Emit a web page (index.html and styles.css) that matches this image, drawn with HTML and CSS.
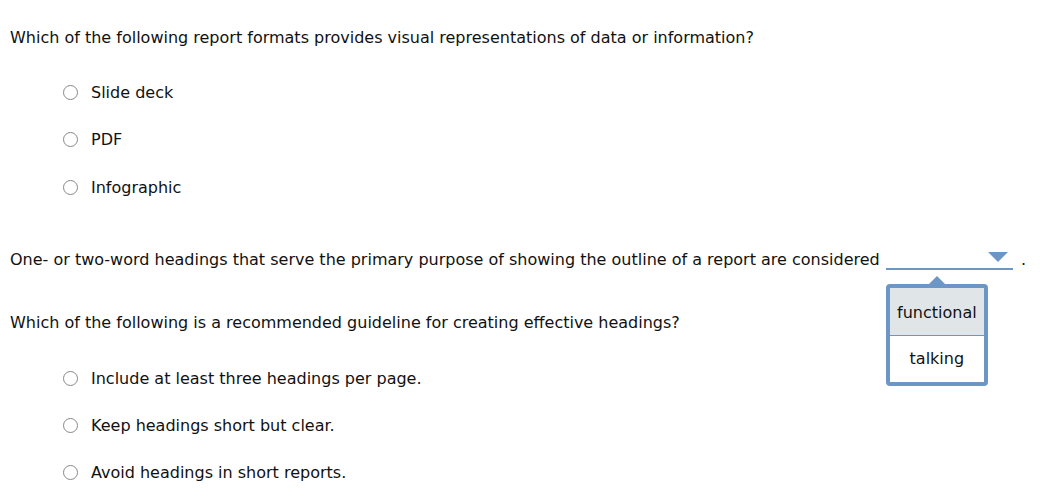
FILE: index.html
```html
<!DOCTYPE html>
<html lang="en">
<head>
    <meta charset="UTF-8">
    <title>Questions</title>
    <link rel="stylesheet" href="styles.css">
</head>
<body>
    <div class="question">
        <p class="prompt">Which of the following report formats provides visual representations of data or information?</p>
        <ul class="options">
            <li><span class="radio"></span>Slide deck</li>
            <li><span class="radio"></span>PDF</li>
            <li><span class="radio"></span>Infographic</li>
        </ul>
    </div>

    <div class="question fill">
        <p class="prompt">One- or two-word headings that serve the primary purpose of showing the outline of a report are considered
            <span class="dropdown">
                <span class="caret"></span>
                <span class="menu">
                    <span class="menu-item selected">functional</span>
                    <span class="menu-item">talking</span>
                </span>
            </span>
            <span class="period">.</span>
        </p>
    </div>

    <div class="question last">
        <p class="prompt">Which of the following is a recommended guideline for creating effective headings?</p>
        <ul class="options">
            <li><span class="radio"></span>Include at least three headings per page.</li>
            <li><span class="radio"></span>Keep headings short but clear.</li>
            <li><span class="radio"></span>Avoid headings in short reports.</li>
        </ul>
    </div>
</body>
</html>
```

FILE: styles.css
```css
body {
    font-family: "DejaVu Sans", Verdana, sans-serif;
    font-size: 16px;
    color: #111;
    background: #fff;
    margin: 0;
    padding: 29px 10px 0 10px;
}
.prompt {
    margin: 0;
    line-height: 18px;
}
.options {
    list-style: none;
    margin: 0;
    padding: 36px 0 0 53px;
}
.options li {
    display: flex;
    align-items: center;
    height: 18px;
    margin-bottom: 29.5px;
}
.radio {
    display: inline-block;
    box-sizing: border-box;
    width: 15px;
    height: 15px;
    border: 1px solid #888;
    border-radius: 50%;
    margin-right: 13px;
}
.fill {
    margin-top: 52px;
}
.dropdown {
    position: relative;
    display: inline-block;
    vertical-align: -5px;
    width: 127px;
    height: 20px;
    margin-left: 1px;
    border-bottom: 2px solid #6b96c5;
}
.caret {
    position: absolute;
    right: 5px;
    top: 4px;
    width: 0;
    height: 0;
    border-left: 10px solid transparent;
    border-right: 10px solid transparent;
    border-top: 10px solid #6b96c5;
}
.period {
    margin-left: 3px;
}
.menu {
    position: absolute;
    left: 0;
    top: 36px;
    width: 102px;
    box-sizing: border-box;
    border: 4px solid #6b96c5;
    border-radius: 4px;
    background: #fff;
    display: flex;
    flex-direction: column;
}
.menu::before {
    content: "";
    position: absolute;
    top: -12px;
    left: 39px;
    border-left: 8px solid transparent;
    border-right: 8px solid transparent;
    border-bottom: 8px solid #6b96c5;
}
.menu-item {
    display: block;
    height: 46px;
    line-height: 46px;
    text-align: center;
}
.menu-item.selected {
    height: 47px;
    line-height: 50px;
    background: #e0e6e8;
    border-bottom: 1px solid #6b96c5;
}
.last {
    margin-top: 44px;
}
.last .options {
    padding-top: 37px;
}
.last .options li {
    margin-bottom: 29px;
}
```
